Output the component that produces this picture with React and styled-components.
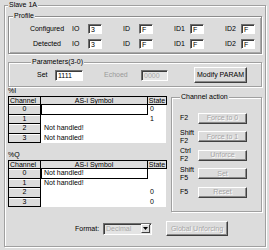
import React from "react";
import styled, { createGlobalStyle } from "styled-components";

const GlobalStyle = createGlobalStyle`
    html, body {
        margin: 0;
        padding: 0;
        background: #dcdcdc;
    }
    body {
        font-family: "Liberation Sans", Arial, sans-serif;
        font-size: 7px;
        line-height: 8px;
        color: #000;
    }
`;

const Page = styled.div`
    width: 269px;
    height: 250px;
    box-sizing: border-box;
    padding: 1px 3px 3px 4px;
    overflow: hidden;
`;

const Group = styled.fieldset`
    margin: 0;
    min-width: 0;
    box-sizing: border-box;
    border: 1px solid #a0a0a0;
    box-shadow: inset 1px 1px 0 #fff, 1px 1px 0 #fff;
`;

const Legend = styled.legend`
    padding: 0 1px;
    margin: 0;
    height: 8px;
    line-height: 8px;
    background: #dcdcdc;
    position: relative;
`;

const Outer = styled(Group)`
    height: 246px;
    padding: 2px 3px 0 3px;
`;

const ProfileBox = styled(Group)`
    margin-top: 1px;
    padding: 4px 0 4px 4px;
    border-color: #8c8c8c;
    box-shadow: inset 1px 1px 0 #fff, 1px 1px 0 #fff, inset -1px -1px 0 #a8a8a8;
`;

const ProfileRow = styled.div`
    display: flex;
    align-items: center;
    height: 10px;
    & + & {
        margin-top: 5px;
    }
`;

const RowLabel = styled.span`
    flex: none;
    width: 50px;
    margin-left: 9px;
    text-align: center;
`;

const Pair = styled.div`
    flex: none;
    display: flex;
    align-items: center;
    width: 51px;
`;

const PairLabel = styled.span`
    flex: none;
    width: 16px;
`;

const Field = styled.div`
    flex: none;
    box-sizing: border-box;
    width: ${(p) => p.$w || 14}px;
    height: ${(p) => p.$h || 10}px;
    padding-left: 2px;
    line-height: 9px;
    background: ${(p) => (p.$disabled ? "#e4e4e4" : "#fff")};
    color: ${(p) => (p.$disabled ? "#a8a8a8" : "#000")};
    border: 1px solid;
    border-color: #6e6e6e #fff #fff #6e6e6e;
    box-shadow: inset 1px 1px 0 #3c3c3c;
`;

const ParamBox = styled(Group)`
    margin-top: 4px;
    padding: 1px 0 3px 22px;
`;

const ParamRow = styled.div`
    display: flex;
    align-items: center;
    height: 16px;
`;

const ParamLabel = styled.span`
    flex: none;
    width: ${(p) => p.$w}px;
    margin-left: ${(p) => p.$ml || 0}px;
    color: ${(p) => (p.$muted ? "#9a9a9a" : "#000")};
`;

const Button = styled.button`
    flex: none;
    box-sizing: border-box;
    width: ${(p) => p.$w}px;
    height: ${(p) => p.$h || 11}px;
    margin: 0 0 0 ${(p) => p.$ml || 0}px;
    padding: 0;
    font-family: inherit;
    font-size: 7px;
    line-height: 8px;
    background: #dcdcdc;
    color: ${(p) => (p.disabled ? "#a6a6a6" : "#000")};
    text-shadow: ${(p) => (p.disabled ? "1px 1px 0 #fff" : "none")};
    border: 1px solid;
    border-color: #fff #404040 #404040 #fff;
    box-shadow: inset -1px -1px 0 #8a8a8a;
`;

const Lower = styled.div`
    display: flex;
    align-items: flex-start;
    gap: 5px;
`;

const TablesCol = styled.div`
    flex: none;
    width: 158px;
`;

const Caption = styled.div`
    margin-top: ${(p) => p.$mt}px;
    height: 8px;
`;

const Grid = styled.div`
    margin-top: ${(p) => p.$mt}px;
    display: grid;
    grid-template-columns: 32px 107px 19px;
    grid-template-rows: 9px 10px 9px 10px 9px;
    background: #fff;
    border-left: 1px solid #000;
`;

const Head = styled.div`
    background: #dcdcdc;
    border-top: 1px solid #000;
    border-bottom: 1px solid #000;
    border-right: 1px solid #000;
    text-align: ${(p) => p.$align || "center"};
    padding-left: ${(p) => (p.$align === "left" ? 1 : 0)}px;
    line-height: 8px;
    box-sizing: border-box;
`;

const ChanCell = styled.div`
    background: #dcdcdc;
    border-right: 1px solid #000;
    border-bottom: 1px solid #000;
    box-shadow: inset 0 1px 0 #fff;
    text-align: center;
    line-height: 8px;
    box-sizing: border-box;
`;

const SymCell = styled.div`
    box-sizing: border-box;
    padding-left: 2px;
    line-height: 8px;
    border: 1px solid ${(p) => (p.$focus ? "#000" : "transparent")};
    border-top: none;
`;

const StateCell = styled.div`
    padding-left: 2px;
    line-height: 8px;
    color: #000;
`;

const ActionBox = styled(Group)`
    flex: none;
    width: 91px;
    margin-top: 6px;
    padding: 9px 0 11px 8px;
`;

const ActionList = styled.div`
    display: flex;
    flex-direction: column;
    gap: 2.5px;
`;

const ActionRow = styled.div`
    display: flex;
    align-items: center;
    height: 16px;
`;

const KeyLabel = styled.span`
    flex: none;
    width: 18px;
`;

const Footer = styled.div`
    display: flex;
    align-items: center;
    margin-top: 9px;
    height: 15px;
`;

const FormatLabel = styled.span`
    flex: none;
    margin-left: 67px;
    width: 28px;
`;

const Combo = styled.div`
    flex: none;
    box-sizing: border-box;
    width: 49px;
    height: 12px;
    display: flex;
    align-items: center;
    justify-content: space-between;
    padding-left: 2px;
    background: #e4e4e4;
    color: #a8a8a8;
    border: 1px solid;
    border-color: #6e6e6e #fff #fff #6e6e6e;
    box-shadow: inset 1px 1px 0 #3c3c3c;
`;

const ComboArrow = styled.span`
    box-sizing: border-box;
    width: 9px;
    height: 9px;
    margin-right: 1px;
    display: flex;
    align-items: center;
    justify-content: center;
    background: #dcdcdc;
    border: 1px solid;
    border-color: #fff #404040 #404040 #fff;
`;

const ioRows = [
    { ch: 0, sym: "", state: "0", focus: true },
    { ch: 1, sym: "", state: "1" },
    { ch: 2, sym: "Not handled!", state: "" },
    { ch: 3, sym: "Not handled!", state: "" },
];

const qRows = [
    { ch: 0, sym: "Not handled!", state: "", focus: true },
    { ch: 1, sym: "Not handled!", state: "" },
    { ch: 2, sym: "", state: "0" },
    { ch: 3, sym: "", state: "0" },
];

const actions = [
    { keys: ["F2"], label: "Force to 0" },
    { keys: ["Shift", "F2"], label: "Force to 1" },
    { keys: ["Ctrl", "F2"], label: "Unforce" },
    { keys: ["Shift", "F5"], label: "Set" },
    { keys: ["F5"], label: "Reset" },
];

function ChannelTable({ rows, mt }) {
    return (
        <Grid $mt={mt}>
            <Head $align="left">Channel</Head>
            <Head>AS-i Symbol</Head>
            <Head>State</Head>
            {rows.map((r) => (
                <React.Fragment key={r.ch}>
                    <ChanCell>{r.ch}</ChanCell>
                    <SymCell $focus={r.focus}>{r.sym}</SymCell>
                    <StateCell>{r.state}</StateCell>
                </React.Fragment>
            ))}
        </Grid>
    );
}

function ProfileLine({ label }) {
    return (
        <ProfileRow>
            <RowLabel>{label}</RowLabel>
            <Pair>
                <PairLabel>IO</PairLabel>
                <Field>3</Field>
            </Pair>
            <Pair>
                <PairLabel>ID</PairLabel>
                <Field>F</Field>
            </Pair>
            <Pair>
                <PairLabel>ID1</PairLabel>
                <Field>F</Field>
            </Pair>
            <Pair>
                <PairLabel>ID2</PairLabel>
                <Field>F</Field>
            </Pair>
        </ProfileRow>
    );
}

export default function App() {
    return (
        <>
            <GlobalStyle />
            <Page>
                <Outer>
                    <Legend>Slave 1A</Legend>
                    <ProfileBox>
                        <Legend>Profile</Legend>
                        <ProfileLine label="Configured" />
                        <ProfileLine label="Detected" />
                    </ProfileBox>
                    <ParamBox>
                        <Legend>Parameters(3-0)</Legend>
                        <ParamRow>
                            <ParamLabel $w={18} $ml={6}>
                                Set
                            </ParamLabel>
                            <Field $w={28} $h={11}>
                                1111
                            </Field>
                            <ParamLabel $w={37} $ml={21} $muted>
                                Echoed
                            </ParamLabel>
                            <Field $w={27} $h={11} $disabled>
                                0000
                            </Field>
                            <Button $w={53} $h={16} $ml={26}>
                                Modify PARAM
                            </Button>
                        </ParamRow>
                    </ParamBox>
                    <Lower>
                        <TablesCol>
                            <Caption $mt={0}>%I</Caption>
                            <ChannelTable rows={ioRows} mt={1} />
                            <Caption $mt={8}>%Q</Caption>
                            <ChannelTable rows={qRows} mt={1} />
                        </TablesCol>
                        <ActionBox>
                            <Legend>Channel action</Legend>
                            <ActionList>
                                {actions.map((a) => (
                                    <ActionRow key={a.label}>
                                        <KeyLabel>
                                            {a.keys.map((k) => (
                                                <div key={k}>{k}</div>
                                            ))}
                                        </KeyLabel>
                                        <Button $w={49} disabled>
                                            {a.label}
                                        </Button>
                                    </ActionRow>
                                ))}
                            </ActionList>
                        </ActionBox>
                    </Lower>
                    <Footer>
                        <FormatLabel>Format:</FormatLabel>
                        <Combo>
                            Decimal
                            <ComboArrow>
                                <svg width="5" height="3" viewBox="0 0 5 3">
                                    <path d="M0 0h5L2.5 3z" fill="#000" />
                                </svg>
                            </ComboArrow>
                        </Combo>
                        <Button $w={62} $h={15} $ml={14} disabled>
                            Global Unforcing
                        </Button>
                    </Footer>
                </Outer>
            </Page>
        </>
    );
}
